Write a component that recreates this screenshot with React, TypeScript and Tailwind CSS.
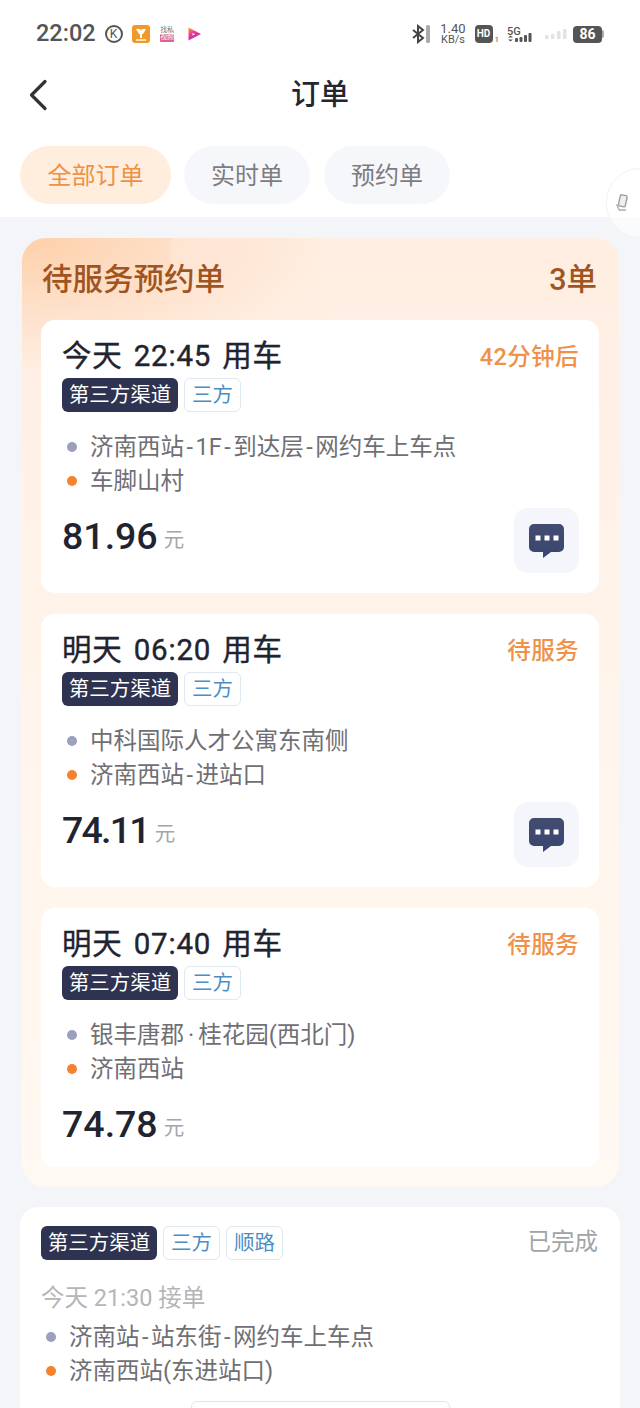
const FONT = "font-['Roboto','Noto_Sans_CJK_SC',sans-serif]";

interface Order {
  title: string;
  status: string;
  from: string;
  to: string;
  price: string;
  priceClass: string;
  chat: boolean;
}

const orders: Order[] = [
  { title: "今天 22:45 用车", status: "42分钟后", from: "济南西站-1F-到达层-网约车上车点", to: "车脚山村", price: "81.96", priceClass: "tracking-normal", chat: true },
  { title: "明天 06:20 用车", status: "待服务", from: "中科国际人才公寓东南侧", to: "济南西站-进站口", price: "74.11", priceClass: "tracking-[-1.8px]", chat: true },
  { title: "明天 07:40 用车", status: "待服务", from: "银丰唐郡·桂花园(西北门)", to: "济南西站", price: "74.78", priceClass: "tracking-normal", chat: false },
];

function StatusBar() {
  return (
    <div className="h-[68px] flex items-center pl-9 pr-9 text-[#555]">
      <span className="text-[23.5px] font-medium leading-none">22:02</span>
      <span className="ml-[9px] w-[18px] h-[18px] rounded-full border-2 border-[#555] flex items-center justify-center text-[12px] leading-none">K</span>
      <svg className="ml-[9px]" width="18" height="18" viewBox="0 0 18 18">
        <rect width="18" height="18" rx="3" fill="#f09a2e" />
        <path d="M4 4h4l1 2 1-2h4l-3 5H7zM8 9h2v4H8z" fill="#fff" />
        <rect x="4" y="14" width="10" height="2" fill="#ffe2b8" />
      </svg>
      <div className="ml-[10px] w-[15px] flex flex-col items-center text-[7px] leading-[7.5px] whitespace-nowrap">
        <span className="text-[#777]">找私</span>
        <span className="bg-[#d9608c] text-white rounded-[1px]">视频</span>
      </div>
      <svg className="ml-[13px]" width="13" height="14" viewBox="0 0 13 14">
        <defs>
          <linearGradient id="play" x1="0" y1="0" x2="0.4" y2="1">
            <stop offset="0" stopColor="#f5a623" />
            <stop offset="0.5" stopColor="#f0398a" />
            <stop offset="1" stopColor="#a530e0" />
          </linearGradient>
        </defs>
        <path d="M0.500 0.500 13 7 0.500 13.500z" fill="url(#play)" />
        <path d="M4.500 6l2.500 1.200-2.500 1.300z" fill="#fff" />
      </svg>

      <div className="ml-auto flex items-center">
        <svg width="19" height="20" viewBox="0 0 19 20" fill="none">
          <path d="M1 6l10 8-5 4V2l5 4L1 14" stroke="#444" strokeWidth="2" />
          <rect x="14" y="1" width="4" height="18" rx="1.5" fill="#aaa" />
        </svg>
        <div className="ml-[9px] w-[27px] flex flex-col items-center text-[#555] leading-none">
          <span className="text-[13px] leading-[12px]">1.40</span>
          <span className="text-[11px] leading-[10px]">KB/s</span>
        </div>
        <span className="ml-2 w-[18px] h-[18px] rounded-[4px] bg-[#555] text-white text-[10px] font-bold leading-none flex items-center justify-center">HD</span>
        <span className="ml-[2px] text-[8px] leading-none self-end mb-[1px]">1</span>
        <svg className="ml-2" width="27" height="19" viewBox="0 0 27 19">
          <text x="0" y="9.500" fontSize="11" fontWeight="500" fill="#555">5G</text>
          <path d="M1 12.500h5l-2.500-2zM1 14.500h5l-2.500 2z" fill="#555" />
          <rect x="8" y="13" width="3" height="4" rx="1" fill="#555" />
          <rect x="12.500" y="12" width="3" height="5" rx="1" fill="#555" />
          <rect x="17" y="10" width="3" height="7" rx="1" fill="#555" />
          <rect x="21.500" y="8" width="3" height="9" rx="1" fill="#555" />
        </svg>
        <svg className="ml-[11px]" width="22" height="11" viewBox="0 0 22 11">
          <rect x="0" y="6" width="3.500" height="4" rx="1" fill="#e2e2e2" />
          <rect x="6" y="5" width="3.500" height="5" rx="1" fill="#e2e2e2" />
          <rect x="12" y="2" width="3.500" height="8" rx="1" fill="#e2e2e2" />
          <rect x="18" y="0" width="3.500" height="10" rx="1" fill="#e2e2e2" />
        </svg>
        <div className="ml-[6px] flex items-center">
          <span className="w-[29px] h-[17px] rounded-[4px] bg-[#555] text-white text-[14px] font-bold leading-none flex items-center justify-center">86</span>
          <span className="w-[2px] h-[8px] rounded-r-[2px] bg-[#aaa]" />
        </div>
      </div>
    </div>
  );
}

function Tags({ extra }: { extra?: string }) {
  const light = "w-[57px] h-[34px] rounded-[6px] border border-[#dde8ef] bg-white text-[#4a8ec4] text-[20.5px] leading-none flex items-center justify-center";
  return (
    <div className="flex gap-[6px]">
      <span className="w-[116px] h-[34px] rounded-[6px] bg-[#2d3350] text-white text-[20.5px] leading-none flex items-center justify-center">第三方渠道</span>
      <span className={light}>三方</span>
      {extra && <span className={light}>{extra}</span>}
    </div>
  );
}

// hyphen and middle dot run wider in the reference's font
function Place({ text }: { text: string }) {
  return (
    <span>
      {text.split(/([-·])/).map((part, i) => {
        if (part === "-") return <span key={i} className="mx-[2.5px]">-</span>;
        if (part === "·") return <span key={i} className="mx-1">·</span>;
        return part;
      })}
    </span>
  );
}

function Route({ from, to }: { from: string; to: string }) {
  return (
    <div className="text-[23.5px] leading-[34px] text-[#6f6f74]">
      <div className="flex items-center">
        <span className="w-[10px] h-[10px] rounded-full bg-[#9c9fbd] ml-[5px] mr-[13px]" />
        <Place text={from} />
      </div>
      <div className="flex items-center">
        <span className="w-[10px] h-[10px] rounded-full bg-[#f5822d] ml-[5px] mr-[13px]" />
        <Place text={to} />
      </div>
    </div>
  );
}

function ChatButton() {
  return (
    <button type="button" className="w-[65px] h-[65px] rounded-[14px] bg-[#f5f6fb] flex items-center justify-center">
      <svg width="35" height="34" viewBox="0 0 35 34">
        <defs>
          <linearGradient id="chat" x1="0" y1="0" x2="0" y2="1">
            <stop offset="0" stopColor="#434c70" />
            <stop offset="1" stopColor="#3a4670" />
          </linearGradient>
        </defs>
        <path d="M5 0h25a5 5 0 0 1 5 5v18a5 5 0 0 1-5 5H22l-8 6v-6H5a5 5 0 0 1-5-5V5a5 5 0 0 1 5-5z" fill="url(#chat)" />
        <rect x="6.500" y="11.500" width="5" height="5" fill="#fff" />
        <rect x="15.500" y="11.500" width="5" height="5" fill="#fff" />
        <rect x="24.500" y="11.500" width="5" height="5" fill="#fff" />
      </svg>
    </button>
  );
}

function OrderCard({ order }: { order: Order }) {
  return (
    <div className="bg-white rounded-[14px] pt-[18px] pb-5 pl-[21px] pr-5">
      <div className="flex justify-between items-center h-9">
        <span className="text-[29.5px] text-[#1f2430] leading-9 tracking-[0.8px] [word-spacing:3px] [-webkit-text-stroke:0.4px_#1f2430]">{order.title}</span>
        <span className="text-[23.5px] font-medium text-[#ef9148] leading-9 tracking-[0.4px] pt-[1px]">{order.status}</span>
      </div>
      <div className="mt-1">
        <Tags />
      </div>
      <div className="mt-[18px]">
        <Route from={order.from} to={order.to} />
      </div>
      <div className="mt-[10px] flex justify-between items-start">
        <div className="h-[51px] flex items-start">
          <span className={`text-[37.5px] font-medium text-[#1f2430] leading-[56px] ${order.priceClass}`}>{order.price}</span>
          <span className="ml-[6px] mt-[22px] text-[20.5px] text-[#a5a5aa] leading-none">元</span>
        </div>
        {order.chat && <ChatButton />}
      </div>
    </div>
  );
}

export default function App() {
  return (
    <div className={`relative w-[640px] h-[1408px] overflow-hidden bg-[#f3f5f9] ${FONT}`}>
      <div className="bg-white h-[217px]">
        <StatusBar />
        <div className="relative h-[54px] flex items-center justify-center">
          <svg className="absolute left-[28px] top-[11px]" width="20" height="32" viewBox="0 0 20 32" fill="none">
            <path d="M17 2.500 3.500 16 17 29.500" stroke="#333" strokeWidth="3.200" strokeLinecap="round" strokeLinejoin="round" />
          </svg>
          <span className="text-[29px] font-medium text-[#23262e] leading-none">订单</span>
        </div>
        <div className="mt-6 ml-5 flex items-center text-[24px] leading-none">
          <span className="w-[151px] h-[58px] pt-[2px] rounded-full bg-[#ffeedd] text-[#ee9146] flex items-center justify-center">全部订单</span>
          <span className="ml-[13px] w-[126px] h-[58px] pt-[2px] rounded-full bg-[#f6f7fb] text-[#7c7c82] flex items-center justify-center">实时单</span>
          <span className="ml-[14px] w-[126px] h-[58px] pt-[2px] rounded-full bg-[#f6f7fb] text-[#7c7c82] flex items-center justify-center">预约单</span>
        </div>
      </div>

      {/* floating side tab over the header */}
      <div className="absolute left-[606px] top-[168px] w-[68px] h-[70px] rounded-full bg-white/60 border border-[#f1f2f5] flex items-center pl-[8px]">
        <svg width="14" height="20" viewBox="0 0 16 22" fill="none">
          <rect x="5" y="2" width="8" height="13" rx="1.500" transform="rotate(12 9 8)" stroke="#9a9a9a" strokeWidth="1.500" fill="#eeeeee" />
          <path d="M2 13l3 6h7" stroke="#aaaaaa" strokeWidth="1.500" strokeLinecap="round" />
        </svg>
      </div>

      <div className="mt-[21px] ml-[22px] w-[597px] rounded-[24px] relative overflow-hidden bg-[linear-gradient(180deg,#ffeee1_0px,#ffefe4_100px,#fff5ec_500px,#fff9f3_100%)]">
        <div className="absolute left-0 top-0 w-[300px] h-[130px] bg-[radial-gradient(ellipse_at_top_left,#fdd0a9_0%,#fee3cf_45%,#ffeee1_72%,#ffeee100_100%)]" />
        <div className="absolute left-[148px] top-[-30px] w-[86px] h-[90px] rounded-full bg-[#ffe8d8]/60" />
        <div className="relative h-[82px] pt-[3px] pl-5 pr-[22px] flex justify-between items-center text-[30.5px] font-medium text-[#a0541f] leading-none">
          <span>待服务预约单</span>
          <span>3单</span>
        </div>
        <div className="relative ml-[19px] mr-5 pb-5 flex flex-col gap-[21px]">
          {orders.map((order) => (
            <OrderCard key={order.title} order={order} />
          ))}
        </div>
      </div>

      <div className="mt-5 ml-5 w-[600px] h-[260px] rounded-t-[18px] bg-white pt-[19px] pl-[21px] pr-[22px]">
        <div className="flex justify-between items-center h-[34px]">
          <Tags extra="顺路" />
          <span className="text-[23.5px] text-[#a3a3a6] leading-none">已完成</span>
        </div>
        <div className="mt-[21px] h-[34px] text-[23.5px] leading-[34px] text-[#b5b5b8]">今天 21:30 接单</div>
        <div className="mt-[5px]">
          <Route from="济南站-站东街-网约车上车点" to="济南西站(东进站口)" />
        </div>
      </div>

      {/* edge of the sheet peeking from the bottom */}
      <div className="absolute left-[191px] top-[1401px] w-[259px] h-3 rounded-t-[6px] border border-[#e3e4e8] bg-white" />
    </div>
  );
}
